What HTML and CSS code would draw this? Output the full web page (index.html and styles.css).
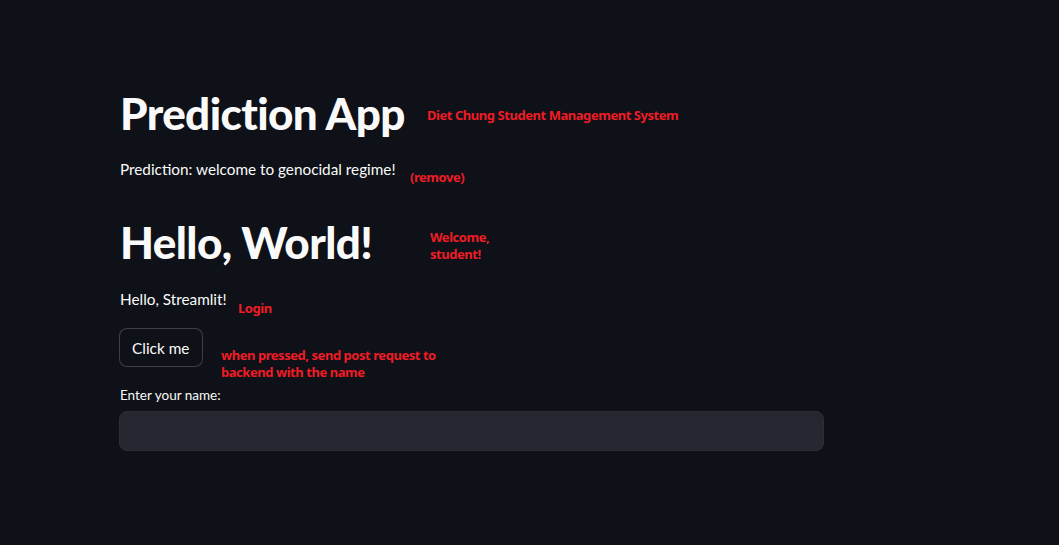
FILE: index.html
```html
<!DOCTYPE html>
<html>
<head>
<meta charset="utf-8">
<link rel="stylesheet" href="styles.css">
</head>
<body>
<main class="app">
  <div class="block">
    <div class="row title-row">
      <h1 class="title">Prediction App</h1>
      <span class="note note-title">Diet Chung Student Management System</span>
    </div>
    <div class="row pred-row">
      <p class="text">Prediction: welcome to genocidal regime!</p>
      <span class="note note-remove">(remove)</span>
    </div>
    <div class="row hello-row">
      <h1 class="title">Hello, World!</h1>
      <span class="note note-welcome">Welcome,<br>student!</span>
    </div>
    <div class="row streamlit-row">
      <p class="text">Hello, Streamlit!</p>
      <span class="note note-login">Login</span>
    </div>
    <div class="row button-row">
      <button class="btn" type="button">Click me</button>
      <span class="note note-button">when pressed, send post request to<br>backend with the name</span>
    </div>
    <div class="field">
      <label class="label" for="name">Enter your name:</label>
      <input class="input" id="name" type="text">
    </div>
  </div>
</main>
</body>
</html>
```
FILE: styles.css
```css
html, body {
  margin: 0;
  padding: 0;
  background: #0e1117;
  color: #fafafa;
  font-family: "Lato", "Noto Sans", sans-serif;
  height: 100%;
}
.app {
  padding: 87px 0 0 120px;
}
.block {
  width: 703px;
  display: flex;
  flex-direction: column;
}
.row {
  position: relative;
}
.title {
  margin: 0;
  font-size: 44px;
  font-weight: 900;
  line-height: 53px;
  letter-spacing: -0.6px;
}
.text {
  margin: 0;
  font-size: 15.3px;
  line-height: 24px;
}
.pred-row { margin-top: 17px; }
.hello-row { margin-top: 35px; }
.streamlit-row { margin-top: 18px; }
.button-row { margin-top: 17px; }
.note {
  position: absolute;
  color: #ee1c25;
  font-family: "Noto Sans", sans-serif;
  font-weight: 700;
  font-size: 13px;
  line-height: 17px;
  letter-spacing: -0.45px;
  white-space: nowrap;
}
.note-title { left: 307px; top: 20px; }
.note-remove { left: 290px; top: 12px; }
.note-welcome { left: 310px; top: 13px; }
.note-login { left: 118px; top: 13px; }
.note-button { left: 101px; top: 19px; }
.btn {
  display: block;
  margin-left: -1px;
  height: 39px;
  padding: 0 12px;
  background: #0e1117;
  color: #fafafa;
  border: 1px solid rgba(250, 250, 250, 0.2);
  border-radius: 8px;
  font-family: inherit;
  font-size: 15.4px;
}
.field {
  margin-top: 18px;
  display: flex;
  flex-direction: column;
}
.label {
  font-size: 13.5px;
  line-height: 20px;
  margin-bottom: 6px;
}
.input {
  margin-left: -1px;
  height: 40px;
  box-sizing: border-box;
  width: 705px;
  background: #262730;
  border: 1px solid #2e2d36;
  border-radius: 8px;
  outline: none;
}
```
